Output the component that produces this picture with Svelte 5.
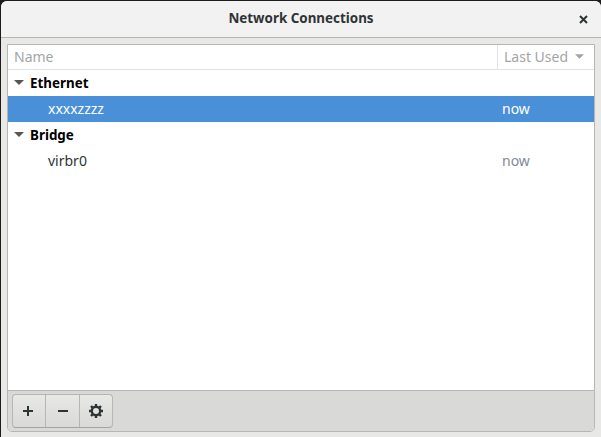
<script>
	const groups = [
		{ name: 'Ethernet', rows: [{ name: 'xxxxzzzz', used: 'now', selected: true }] },
		{ name: 'Bridge', rows: [{ name: 'virbr0', used: 'now', selected: false }] }
	];
</script>

<div class="desktop">
	<div class="window">
		<header class="titlebar">
			<h1>Network Connections</h1>
			<svg class="close" width="9" height="9" viewBox="0 0 9 9">
				<path d="M1 1l7 7M8 1l-7 7" stroke="#2e3436" stroke-width="2" fill="none" />
			</svg>
		</header>
		<div class="body">
			<div class="frame">
				<div class="columns">
					<div class="col col--name">Name</div>
					<div class="col col--used">
						Last Used
						<svg width="9" height="5" viewBox="0 0 10 5"><path d="M0 0h10L5 5z" fill="#a3a5a5" /></svg>
					</div>
				</div>
				<div class="list">
					{#each groups as group}
						<div class="row row--group">
							<svg class="arrow" width="10" height="5" viewBox="0 0 10 5"><path d="M0 0h10L5 5z" fill="#555753" /></svg>
							<span>{group.name}</span>
						</div>
						{#each group.rows as row}
							<div class="row row--item" class:selected={row.selected}>
								<span class="item-name">{row.name}</span>
								<span class="item-used">{row.used}</span>
							</div>
						{/each}
					{/each}
				</div>
				<div class="toolbar">
					<div class="buttons">
						<button aria-label="Add">
							<svg width="10" height="10" viewBox="0 0 10 10"><path d="M5 0v10M0 5h10" stroke="#2e3436" stroke-width="2" fill="none" /></svg>
						</button>
						<button aria-label="Remove">
							<svg width="10" height="10" viewBox="0 0 10 10"><path d="M0 5h10" stroke="#2e3436" stroke-width="2" fill="none" /></svg>
						</button>
						<button aria-label="Settings">
							<svg width="14" height="14" viewBox="0 0 14 14">
								<circle cx="7" cy="7" r="4.2" fill="none" stroke="#2e3436" stroke-width="2.4" />
								<path d="M7 0v2.5M7 11.5V14M0 7h2.5M11.5 7H14M2 2l1.8 1.8M10.2 10.2L12 12M12 2l-1.8 1.8M3.8 10.2L2 12" stroke="#2e3436" stroke-width="2.4" fill="none" />
							</svg>
						</button>
					</div>
				</div>
			</div>
		</div>
	</div>
</div>

<style>
	:global(body) {
		margin: 0;
		background: #1c1c1c;
	}

	.desktop {
		width: 601px;
		height: 437px;
		box-sizing: border-box;
		padding: 1px 0 0 1px;
		overflow: hidden;
		font-family: "Noto Sans", "Open Sans", sans-serif;
		font-size: 14px;
		color: #2e3436;
	}

	.window {
		height: 436px;
		display: flex;
		flex-direction: column;
		background: #e8e8e7;
		border-radius: 6px 6px 0 0;
		overflow: hidden;
	}

	.titlebar {
		height: 36px;
		flex: none;
		box-sizing: content-box;
		display: flex;
		align-items: center;
		justify-content: center;
		position: relative;
		background: #f2f2f2;
		border-bottom: 1px solid #b6b6b3;
	}

	h1 {
		margin: 0 0 2px;
		font-size: 13.4px;
		font-weight: 700;
		color: #2e3436;
	}

	.close {
		position: absolute;
		right: 13px;
		top: 14px;
	}

	.body {
		flex: 1;
		min-height: 0;
		padding: 6px 6px 5px 6px;
		display: flex;
	}

	.frame {
		flex: 1;
		display: flex;
		flex-direction: column;
		border: 1px solid #b6b6b3;
		border-radius: 0 0 5px 5px;
		background: #fff;
		overflow: hidden;
	}

	.columns {
		height: 24px;
		flex: none;
		display: flex;
		border-bottom: 1px solid #e1e2e1;
		color: #a3a5a5;
	}

	.col {
		display: flex;
		align-items: center;
		gap: 7px;
		padding-bottom: 2px;
	}

	.col--name {
		flex: 1;
		padding-left: 6px;
	}

	.col--used {
		width: 97px;
		box-sizing: border-box;
		padding-left: 6px;
		border-left: 1px solid #e1e2e1;
	}

	.list {
		flex: 1;
	}

	.row {
		height: 26px;
		box-sizing: border-box;
		padding-bottom: 2px;
		display: flex;
		align-items: center;
	}

	.row--group {
		padding-bottom: 0;
		font-size: 13.4px;
		font-weight: 700;
		color: #000;
	}

	.row--item {
		color: #2e3436;
	}

	.arrow {
		margin: 0 6px 2px 6px;
	}

	.selected {
		background: #4a90d9;
		color: #fff;
	}

	.item-name {
		flex: 1;
		padding-left: 40px;
	}

	.item-used {
		width: 92px;
		color: #7f8b99;
	}

	.selected .item-used {
		color: #fff;
	}

	.toolbar {
		height: 41px;
		flex: none;
		box-sizing: border-box;
		padding: 3px 4px;
		background: #d9d9d7;
		border-top: 1px solid #b6b6b3;
	}

	.buttons {
		display: inline-flex;
		height: 34px;
		box-sizing: border-box;
		border: 1px solid #b6b6b3;
		border-bottom-color: #a5a5a2;
		border-radius: 4px;
		background: linear-gradient(#e8e8e7, #d9d9d7);
	}

	button {
		width: 34px;
		padding: 0;
		border: 0;
		border-left: 1px solid #b6b6b3;
		background: none;
		display: flex;
		align-items: center;
		justify-content: center;
	}

	button:first-child {
		width: 32px;
		padding-right: 2px;
		border-left: 0;
	}

	button:last-child {
		width: 33px;
	}
</style>
